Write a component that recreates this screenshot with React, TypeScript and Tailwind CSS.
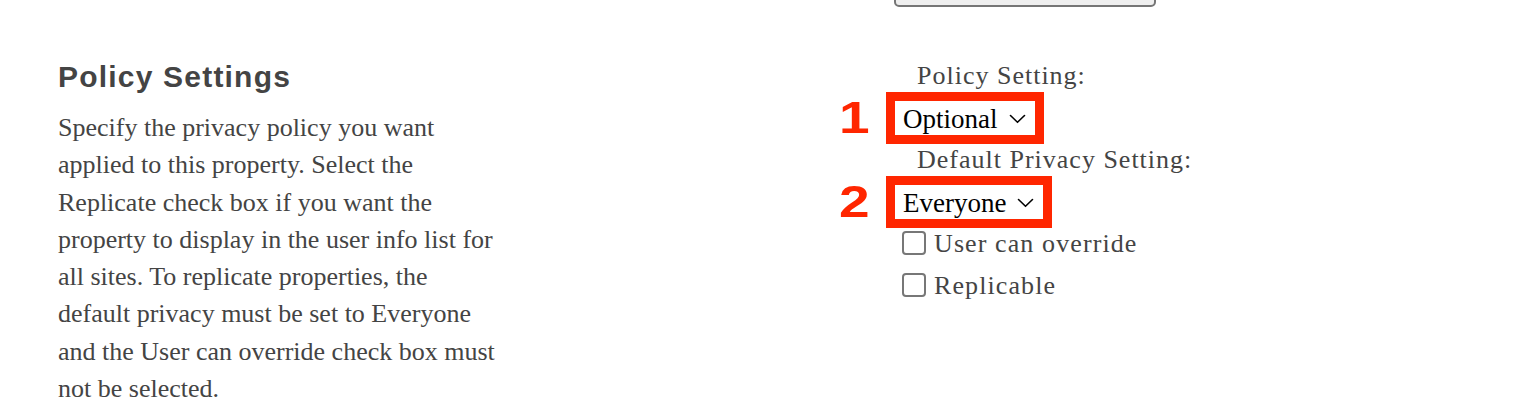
import { useState } from "react";

type Option = { value: string; label: string };

const policyOptions: Option[] = [
  { value: "optional", label: "Optional" },
  { value: "required", label: "Required" },
  { value: "disabled", label: "Disabled" },
];

const privacyOptions: Option[] = [
  { value: "everyone", label: "Everyone" },
  { value: "manager", label: "My Manager" },
  { value: "team", label: "My Team" },
  { value: "me", label: "Only Me" },
];

function Chevron() {
  return (
    <svg width="17" height="10" viewBox="0 0 17 10" fill="none" className="shrink-0">
      <path d="M1.5 1.5 L8.5 8.3 L15.5 1.5" stroke="#000" strokeWidth="1.6" strokeLinecap="round" strokeLinejoin="round" />
    </svg>
  );
}

// select box with the red callout frame and its step number
function MarkedSelect({ step, options, value }: { step: number; options: Option[]; value: string }) {
  const current = options.find((o) => o.value === value) ?? options[0];
  return (
    <div className="relative self-start">
      <span className="absolute right-full mr-[20px] top-1/2 -translate-y-1/2 scale-x-125 text-[44px] leading-none font-bold text-[#ff2600] font-['Liberation_Sans',Arial,sans-serif]">
        {step}
      </span>
      <div className="border-[9px] border-[#ff2600] bg-white">
        <div className="h-[34px] flex items-center pl-[8px] pr-[9px] gap-[11px]">
          <span className="pt-[2px] text-[27px] leading-[32px] text-black font-['Liberation_Serif','Times_New_Roman',serif]">
            {current.label}
          </span>
          <div className="mt-[2px]">
            <Chevron />
          </div>
        </div>
      </div>
    </div>
  );
}

function CheckRow({ label, checked, onToggle }: { label: string; checked: boolean; onToggle: () => void }) {
  return (
    <label className="flex items-center gap-[8px] cursor-pointer">
      <span
        onClick={onToggle}
        className="w-[24px] h-[24px] border-2 border-[#777] rounded-[4px] bg-white mb-[3px]"
      />
      <span className="text-[26px] leading-[32px] tracking-[1.1px] text-[#444] font-['Liberation_Serif','Times_New_Roman',serif]">
        {label}
      </span>
    </label>
  );
}

export default function App() {
  const [policy] = useState("optional");
  const [privacy] = useState("everyone");
  const [userOverride, setUserOverride] = useState(false);
  const [replicable, setReplicable] = useState(false);

  return (
    <div className="w-[1516px] h-[418px] overflow-hidden bg-white flex">
      {/* description column */}
      <div className="ml-[58px] w-[442px] pt-[61px]">
        <h2 className="text-[30px] leading-[32px] font-bold tracking-[1.2px] text-[#444] font-['Liberation_Sans',Arial,sans-serif]">
          Policy Settings
        </h2>
        <p className="mt-[16px] text-[26px] leading-[37.3px] text-[#444] font-['Liberation_Serif','Times_New_Roman',serif]">
          Specify the privacy policy you want applied to this property. Select the Replicate check box if you want the
          property to display in the user info list for all sites. To replicate properties, the default privacy must be
          set to Everyone and the User can override check box must not be selected.
        </p>
      </div>

      {/* settings column */}
      <div className="ml-[386px] flex flex-col">
        <div className="ml-[8px] w-[262px] h-[40px] -mt-[33px] border-2 border-[#767676] bg-[#efefef] rounded-[5px]" />

        <div className="mt-[53px] ml-[31px] text-[26px] leading-[32px] tracking-[1px] text-[#444] font-['Liberation_Serif','Times_New_Roman',serif]">
          Policy Setting:
        </div>
        <MarkedSelect step={1} options={policyOptions} value={policy} />

        <div className="ml-[31px] text-[26px] leading-[32px] tracking-[1px] text-[#444] font-['Liberation_Serif','Times_New_Roman',serif]">
          Default Privacy Setting:
        </div>
        <MarkedSelect step={2} options={privacyOptions} value={privacy} />

        <div className="ml-[16px] flex flex-col gap-[10px]">
          <CheckRow label="User can override" checked={userOverride} onToggle={() => setUserOverride(!userOverride)} />
          <CheckRow label="Replicable" checked={replicable} onToggle={() => setReplicable(!replicable)} />
        </div>
      </div>
    </div>
  );
}
